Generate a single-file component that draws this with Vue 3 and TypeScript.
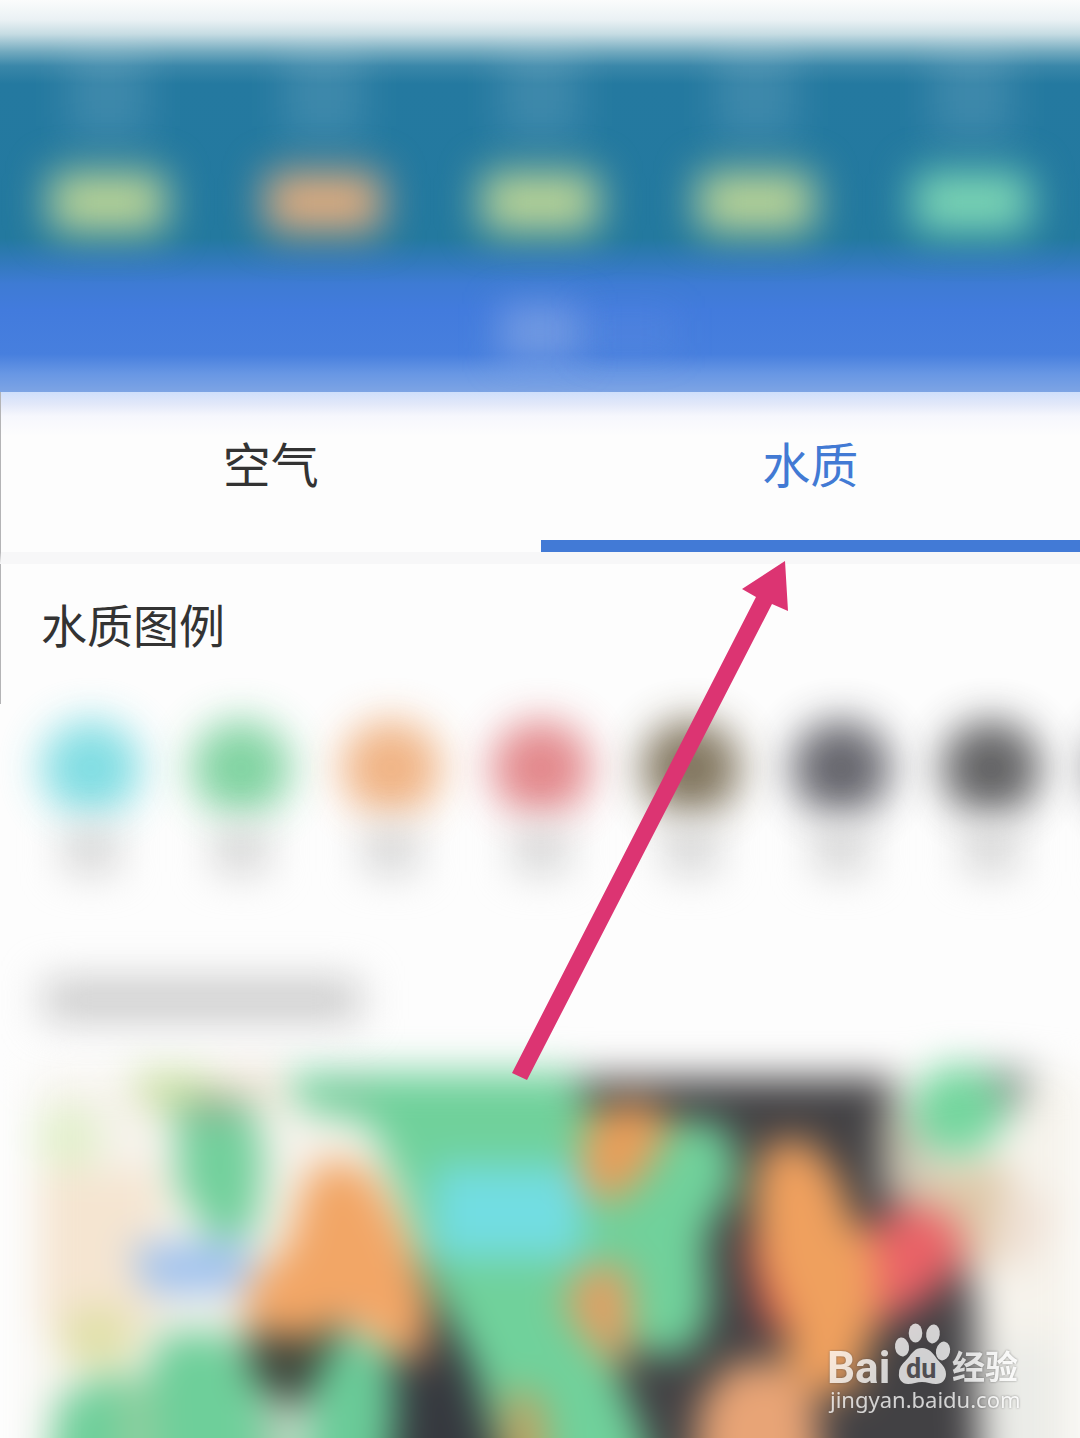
<script setup lang="ts">
import { ref } from 'vue'

type TabId = 'air' | 'water'

interface Tab {
  id: TabId
  label: string
}

const tabs: Tab[] = [
  { id: 'air', label: '空气' },
  { id: 'water', label: '水质' },
]
const active = ref<TabId>('water')

const days: string[] = ['#bad496', '#e0ac7e', '#bad496', '#bad496', '#7cd6b4']

const levels: string[] = [
  '#74dae0',
  '#74cf98',
  '#efac78',
  '#e07c80',
  '#75684e',
  '#56565e',
  '#525254',
  '#54545c',
]
</script>

<template>
  <main class="page">
    <header class="hero">
      <ul class="days">
        <li v-for="(color, i) in days" :key="i" class="day">
          <span class="day-label"></span>
          <span class="day-pill" :style="{ background: color }"></span>
        </li>
      </ul>
      <div class="band">
        <span class="band-title"></span>
        <span class="band-note"></span>
      </div>
    </header>

    <nav class="tabs">
      <button
        v-for="tab in tabs"
        :key="tab.id"
        type="button"
        class="tab"
        :class="{ active: active === tab.id }"
        @click="active = tab.id"
      >
        {{ tab.label }}
      </button>
    </nav>

    <section class="legend">
      <h2 class="legend-title">水质图例</h2>
      <ul class="levels">
        <li v-for="(color, i) in levels" :key="i" class="level">
          <span class="dot" :style="{ background: color }"></span>
          <span class="level-label"></span>
        </li>
      </ul>
    </section>

    <section class="map">
      <div class="map-title"></div>
      <svg class="map-canvas" viewBox="0 0 1080 398" aria-hidden="true">
        <defs>
          <filter id="soft" filterUnits="userSpaceOnUse" x="-80" y="-60" width="1240" height="600" color-interpolation-filters="sRGB">
            <feGaussianBlur stdDeviation="19" />
          </filter>
        </defs>
        <g filter="url(#soft)">
          <path d="M35 34H1080V540H35Z" fill="#f6f3ec" />
          <path d="M40 130H160V290H40Z" fill="#f5e5d1" />
          <ellipse cx="68" cy="98" rx="34" ry="32" fill="#e2f0cc" />
          <path d="M130 30L200 30L235 60L200 90L145 65Z" fill="#cddfa6" />
          <path d="M210 30H290L270 70L230 62Z" fill="#ece0d0" />
          <path d="M985 300H1060V540H985Z" fill="#ebece8" />
          <path d="M900 130L1010 125L1020 220L940 230L880 170Z" fill="#ddc8a8" />
          <path d="M1000 150L1055 160L1030 230L990 220Z" fill="#efe0d4" />
          <path d="M176 62L252 62L264 120L256 190L215 202L178 150Z" fill="#72d09c" />
          <path d="M195 58L240 58L235 78L190 78Z" fill="#94a890" />
          <path d="M130 206L220 200L256 204L244 252L148 254Z" fill="#a0c2ee" />
          <ellipse cx="98" cy="298" rx="38" ry="32" fill="#e0e0a8" />
          <path d="M35 540L58 360L105 335L148 340L160 294L230 292L264 345L270 540Z" fill="#6ecf9a" />
          <path d="M120 350L150 330L165 540L130 540Z" fill="#94cfa0" />
          <path d="M565 38L895 38L885 100L882 150L950 190L974 250L984 540L600 540L590 120Z" fill="#424144" />
          <path d="M980 26L1036 30L1014 78L985 60Z" fill="#8c9690" />
          <path d="M880 78L925 78L930 150L905 158L885 130Z" fill="#c9c3b0" />
          <ellipse cx="958" cy="70" rx="46" ry="46" fill="#74d69e" />
          <path d="M415 220L460 225L505 330L530 540L380 540L385 350Z" fill="#36393f" />
          <path d="M290 32L572 32L585 60L640 110L685 78L728 88L738 140L706 195L710 272L692 312L655 316L615 300L622 345L645 400L665 540L530 540L475 330L425 230L400 150L370 84L300 68Z" fill="#70d19b" />
          <path d="M325 34L365 34L370 58L345 58Z" fill="#80c49c" />
          <path d="M434 126H582V218H434Z" fill="#72dde2" />
          <path d="M586 78L630 60L674 76L648 132L610 166L578 142Z" fill="#e89e5a" />
          <path d="M586 224L628 226L634 290L620 334L582 294L562 262Z" fill="#dfa064" />
          <path d="M245 276L340 266L355 325L290 370L252 338Z" fill="#3c443a" />
          <path d="M325 118L370 130L404 190L430 260L424 326L385 306L345 278L305 300L244 288L248 245L288 205L303 145Z" fill="#f2a666" />
          <path d="M338 294L388 308L396 360L380 540L290 540L312 345Z" fill="#6acb98" />
          <path d="M262 370L295 370L290 540L258 540Z" fill="#a6cbb0" />
          <path d="M505 348L542 358L560 540L500 540Z" fill="#c2a060" />
          <path d="M744 198L780 190L790 290L762 288Z" fill="#cc4a46" />
          <path d="M865 192L905 164L952 176L966 215L932 256L880 284L855 292Z" fill="#ea6267" />
          <path d="M764 106L805 98L838 136L854 185L874 195L880 270L854 352L788 352L786 285L762 230L752 160Z" fill="#efa05e" />
          <path d="M686 540L700 362L733 322L778 322L816 362L830 540Z" fill="#e8a476" />
        </g>
      </svg>

      <svg class="watermark" viewBox="0 0 230 120" role="img" aria-label="Baidu 经验">
        <g class="mark">
          <text class="mark-bai" x="17" y="73">Bai</text>
          <ellipse cx="92" cy="37" rx="7" ry="9.5" transform="rotate(-8 92 37)" />
          <ellipse cx="105.5" cy="23" rx="6.8" ry="9.5" />
          <ellipse cx="123" cy="24" rx="6.8" ry="9.5" transform="rotate(8 123 24)" />
          <ellipse cx="133" cy="41" rx="7" ry="9.5" transform="rotate(12 133 41)" />
          <path d="M112 38C119 38 123 43 127 49C131 54 136 57 136 64C136 70 132 74 126 74C121 74 117 72 112 72C107 72 103 74 98 74C92 74 88 69 89 63C89 56 94 53 98 48C102 43 105 38 112 38Z" />
          <text class="mark-jy" x="142" y="69">经验</text>
          <text class="mark-url" x="20" y="98">jingyan.baidu.com</text>
        </g>
        <text class="mark-du" x="96" y="68">du</text>
      </svg>
    </section>

    <svg class="pointer" viewBox="0 0 1080 1438" aria-hidden="true">
      <path d="M785 561L742 589L756 597L512 1073L527 1080L772 604L788 611Z" fill="#dc3472" />
    </svg>
  </main>
</template>

<style>
body {
  margin: 0;
  background: #fdfdfd;
}
</style>

<style scoped>
.page {
  position: relative;
  overflow: hidden;
  font-family: "Noto Sans CJK SC", sans-serif;
  color: #333;
}

ul {
  margin: 0;
  padding: 0;
  list-style: none;
}

.hero {
  overflow: hidden;
  background: linear-gradient(
    #fbfcfc 0,
    #eaf1f4 20px,
    #c6dce3 34px,
    #71a9be 52px,
    #3a87a9 66px,
    #2479a0 84px,
    #23799f 238px,
    #2f79b6 258px,
    #3e7bd4 284px,
    #427bdd 310px,
    #477fde 354px,
    #6897e4 374px,
    #7da4e4 100%
  );
}

.days {
  display: flex;
  padding-top: 48px;
}

.day {
  flex: 1;
  display: flex;
  flex-direction: column;
  align-items: center;
  gap: 32px;
}

.day-label {
  width: 80px;
  height: 92px;
  background: rgba(255, 255, 255, 0.12);
  filter: blur(20px);
}

.day-pill {
  width: 116px;
  height: 60px;
  border-radius: 8px;
  filter: blur(20px);
}

.band {
  display: grid;
  grid-template-columns: 1fr 80px 1fr;
  align-items: center;
  padding: 72px 0 32px;
}

.band-title {
  grid-column: 2;
  height: 56px;
  background: rgba(150, 176, 230, 0.55);
  filter: blur(18px);
}

.band-note {
  width: 96px;
  height: 48px;
  background: rgba(150, 176, 230, 0.12);
  filter: blur(18px);
}

.tabs {
  display: flex;
  border-bottom: 12px solid #f7f7f8;
  border-left: 1px solid #b4b4b6;
  background: linear-gradient(#cfdffb 0, #e2e8f9 12px, #f6f7fd 24px, #fdfdfd 44px);
}

.tab {
  flex: 1;
  box-sizing: border-box;
  height: 160px;
  padding: 0 0 8px;
  border: 0;
  border-bottom: 12px solid transparent;
  background: none;
  font-family: inherit;
  font-size: 48px;
  line-height: 72px;
  color: #333;
  cursor: pointer;
}

.tab.active {
  color: #427ad4;
  border-bottom-color: #427ad6;
}

.legend-title {
  margin: 0;
  padding: 25px 40px 47px;
  border-left: 1px solid #b4b4b6;
  font-size: 46px;
  font-weight: 400;
  line-height: 68px;
}

.levels {
  display: flex;
  padding: 16px 0 0 16px;
}

.level {
  flex: 0 0 150px;
  display: flex;
  flex-direction: column;
  align-items: center;
  gap: 12px;
}

.dot {
  width: 100px;
  height: 96px;
  border-radius: 50%;
  opacity: 0.9;
  filter: blur(20px);
}

.level-label {
  width: 52px;
  height: 44px;
  background: #d2d2d2;
  filter: blur(20px);
}

.map {
  position: relative;
}

.map-title {
  width: 316px;
  height: 40px;
  margin: 108px 0 20px 44px;
  background: #c8c8c8;
  filter: blur(20px);
}

.map-canvas {
  display: block;
  width: 100%;
  overflow: visible;
}

.watermark {
  position: absolute;
  right: 40px;
  bottom: 8px;
  width: 230px;
}

.mark {
  fill: #fff;
  opacity: 0.76;
  filter: drop-shadow(0 0 1px rgba(70, 70, 70, 0.7));
}

.mark-bai {
  font: 700 44px Roboto, sans-serif;
}

.mark-jy {
  font: 700 33px "Noto Sans CJK SC", sans-serif;
}

.mark-url {
  font: 400 22px "Noto Sans", sans-serif;
}

.mark-du {
  font: 700 27px Roboto, sans-serif;
  fill: #504e52;
}

.pointer {
  position: absolute;
  top: 0;
  left: 0;
  width: 100%;
  pointer-events: none;
}
</style>
